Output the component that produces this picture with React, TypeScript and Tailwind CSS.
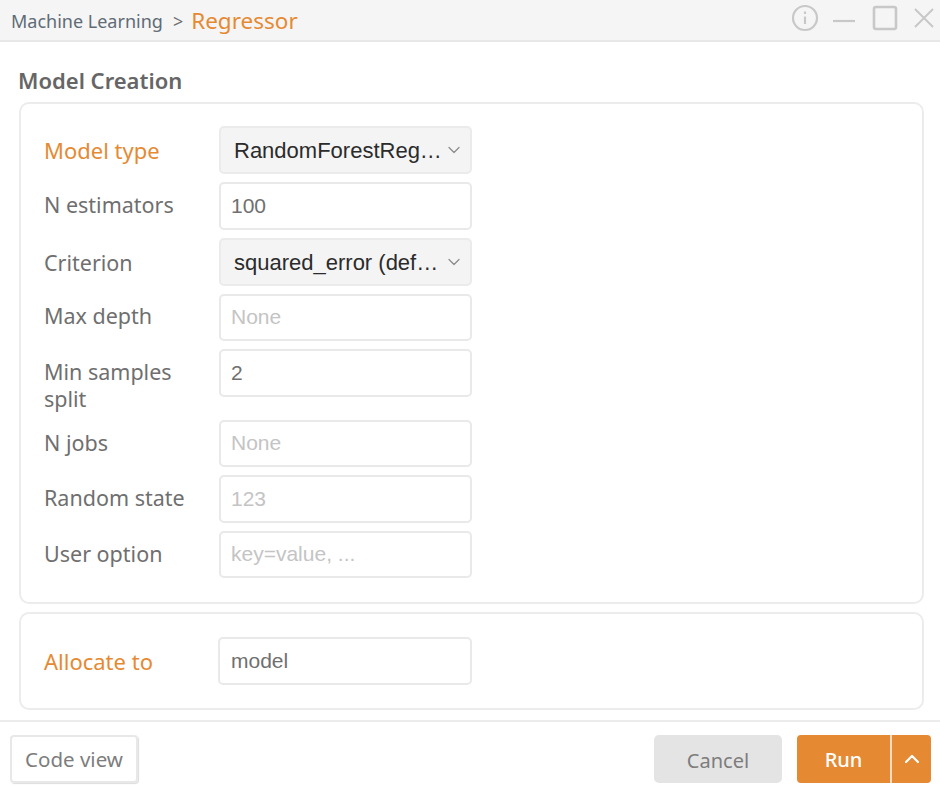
import React from 'react';
import { ChevronDown, ChevronUp } from 'lucide-react';

const labelClass = 'w-[175px] shrink-0 text-[21.5px] leading-[27px] text-[#6f6f6f]';
const activeLabelClass = 'shrink-0 text-[22px] leading-[27px] text-[#e58a33]';
const boxClass = "flex items-center rounded-[5px] border-2 border-[#e9e9e9] font-['Liberation_Sans',sans-serif] text-[21px]";

function SelectRow({ label, value, active }: { label: string; value: string; active?: boolean }) {
  return (
    <div className="flex items-center">
      <span className={active ? `${activeLabelClass} w-[175px]` : labelClass}>{label}</span>
      <div className="flex h-[48px] w-[253px] items-center rounded-[5px] border-2 border-[#ebebeb] bg-[#f4f4f4] pl-[13px] pr-[6px]">
        <span className="flex-1 truncate font-['Liberation_Sans',sans-serif] text-[22px] text-[#2b2b2b]">{value}</span>
        <ChevronDown className="h-[20px] w-[20px] shrink-0 text-[#8c8c8c]" strokeWidth={1.5} />
      </div>
    </div>
  );
}

function InputRow({ label, value, placeholder, short, tightLabel }: { label: string; value?: string; placeholder?: string; short?: boolean; tightLabel?: boolean }) {
  return (
    <div className="flex items-start">
      <span className={`${labelClass} ${tightLabel ? 'mt-[8px]' : 'mt-[9px]'}`}>{label}</span>
      <div className={`${boxClass} w-[253px] pl-[10px] ${short ? 'h-[47px] pb-[2px]' : 'h-[48px]'} ${value ? 'text-[#707070]' : 'text-[#c4c4c4]'}`}>
        {value ?? placeholder}
      </div>
    </div>
  );
}

export default function App() {
  return (
    <div className="flex h-[792px] w-[940px] flex-col bg-white font-['Noto_Sans',sans-serif]">
      <header className="flex h-[42px] shrink-0 items-center border-b-2 border-[#e8e8e8] bg-[#f5f5f5] pl-[11px] pr-[6px]">
        <span className="mt-[3px] text-[18px] text-[#5f6b76]">Machine Learning</span>
        <span className="ml-[10px] mt-[3px] text-[18px] text-[#6f6f6f]">&gt;</span>
        <span className="ml-[8px] mt-[1px] text-[22.5px] text-[#e58a33]">Regressor</span>
        <div className="mb-[5px] ml-auto flex items-center">
          <svg width="28" height="28" viewBox="0 0 28 28" fill="none" stroke="#c8c8c8" strokeWidth="2.2">
            <circle cx="14" cy="14" r="12" />
            <path d="M14 12.5v7.5" />
            <path d="M14 7.5v2.5" />
          </svg>
          <svg className="ml-[13px] mt-[6px]" width="24" height="4" viewBox="0 0 24 4" stroke="#c8c8c8" strokeWidth="2.2">
            <path d="M1 2h22" />
          </svg>
          <svg className="ml-[16px]" width="26" height="26" viewBox="0 0 26 26" fill="none" stroke="#c8c8c8" strokeWidth="2.6">
            <rect x="2" y="2" width="22" height="22" rx="2" />
          </svg>
          <svg className="ml-[16px]" width="20" height="20" viewBox="0 0 20 20" stroke="#c8c8c8" strokeWidth="2">
            <path d="M1 1l18 18M19 1L1 19" />
          </svg>
        </div>
      </header>

      <main className="flex-1 px-[19px]">
        <h2 className="-ml-px mt-[21px] text-[22px] font-semibold leading-[34px] text-[#666666]">Model Creation</h2>
        <section className="mt-[5px] flex h-[502px] w-[905px] flex-col gap-[8px] rounded-[10px] border-2 border-[#ececec] pl-[23px] pt-[22px]">
          <SelectRow label="Model type" value="RandomForestReg…" active />
          <InputRow label="N estimators" value="100" />
          <SelectRow label="Criterion" value="squared_error (def…" />
          <InputRow label="Max depth" placeholder="None" short tightLabel />
          <div className="flex items-start">
            <span className={`${labelClass} mt-[9px]`}>Min samples split</span>
            <div className={`${boxClass} h-[48px] w-[253px] pl-[10px] text-[#707070]`}>2</div>
          </div>
          <InputRow label="N jobs" placeholder="None" short />
          <InputRow label="Random state" placeholder="123" />
          <InputRow label="User option" placeholder="key=value, ..." short />
        </section>
        <section className="mt-[8px] flex h-[98px] w-[905px] items-center rounded-[10px] border-2 border-[#ececec] pl-[23px]">
          <span className={`${activeLabelClass} w-[174px]`}>Allocate to</span>
          <div className={`${boxClass} h-[48px] w-[254px] pl-[11px] text-[#707070]`}>model</div>
        </section>
      </main>

      <footer className="flex h-[72px] shrink-0 items-start border-t-2 border-[#ececec] pl-[10px] pr-[9px] pt-[13px]">
        <button className="h-[48px] w-[128px] rounded-[4px] border-2 border-[#e8e8e8] text-[20.5px] text-[#7d7d7d] shadow-[1px_1px_1px_#dddddd]">
          Code view
        </button>
        <button className="ml-auto h-[48px] w-[128px] rounded-[5px] bg-[#e4e4e4] pt-[3px] text-[20px] text-[#7d7d7d]">Cancel</button>
        <div className="ml-[15px] flex h-[48px] overflow-hidden rounded-[4px] bg-[#e58a33] text-white">
          <button className="h-full w-[93px] pt-[2px] text-[20px] font-medium">Run</button>
          <div className="w-[2px] bg-[#f6dcc3]" />
          <button className="flex h-full w-[39px] items-center justify-center">
            <ChevronUp className="h-[24px] w-[24px]" strokeWidth={2.2} />
          </button>
        </div>
      </footer>
    </div>
  );
}
